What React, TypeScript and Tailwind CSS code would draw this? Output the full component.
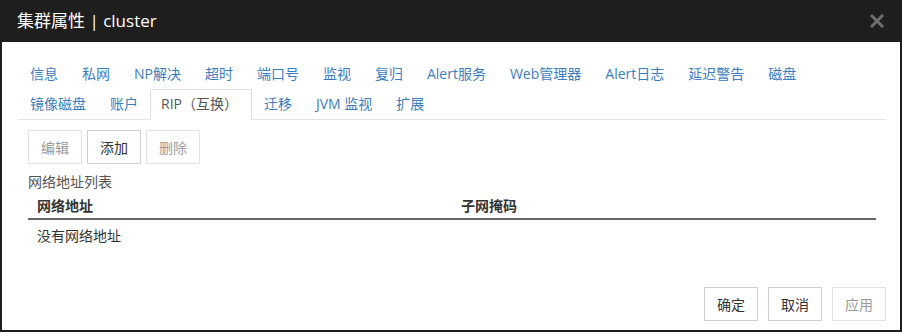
import React from "react";

const row1 = ["信息", "私网", "NP解决", "超时", "端口号", "监视", "复归", "Alert服务", "Web管理器", "Alert日志", "延迟警告", "磁盘"];
const row2 = ["镜像磁盘", "账户", "RIP（互换）", "迁移", "JVM 监视", "扩展"];

function Tab({ label, active }: { label: string; active?: boolean }) {
  if (active) {
    return (
      <div className="h-[31px] -mb-px pl-[10px] pr-[13px] border border-[#ddd] border-b-white bg-white text-[#555] leading-[28px] whitespace-nowrap rounded-t-[2px]">
        {label}
      </div>
    );
  }
  return (
    <div className="h-[30px] px-[11px] border border-transparent text-[#3b7dc0] leading-[28px] whitespace-nowrap">
      {label}
    </div>
  );
}

function Btn({ label, enabled }: { label: string; enabled?: boolean }) {
  return (
    <div
      className={
        "w-[54px] h-[34px] flex items-center justify-center border text-[14px] " +
        (enabled ? "border-[#cfcfcf] text-[#333]" : "border-[#e3e3e3] text-[#9a9a9a]")
      }
    >
      {label}
    </div>
  );
}

export default function App() {
  return (
    <div
      className="w-[904px] h-[334px] bg-white text-[14px]"
      style={{ fontFamily: '"Open Sans","Noto Sans CJK SC",sans-serif' }}
    >
      <div className="w-[902px] h-[332px] border-x-2 border-b-2 border-[#1e1e1e] flex flex-col">
        <div className="h-[42px] bg-[#1e1e1e] flex items-center justify-between pl-[15px] pr-[16px] shrink-0">
          <div className="text-white text-[17px] leading-[24px]">集群属性 | cluster</div>
          <svg width="14" height="14" viewBox="0 0 14 14">
            <path d="M2 2 L12 12 M12 2 L2 12" stroke="#6e6e6e" strokeWidth="3" strokeLinecap="square" />
          </svg>
        </div>
        <div className="flex-1 flex flex-col pt-[17px] pl-[16px] pr-[14px] pb-[9px]">
          <div className="flex flex-wrap items-start border-b border-[#e5e5e5]">
            {row1.map((t) => (
              <Tab key={t} label={t} />
            ))}
            <div className="basis-full h-0" />
            {row2.map((t) => (
              <Tab key={t} label={t} active={t === "RIP（互换）"} />
            ))}
          </div>
          <div className="px-[10px]">
            <div className="flex gap-[5px] mt-[10px]">
              <Btn label="编辑" />
              <Btn label="添加" enabled />
              <Btn label="删除" />
            </div>
            <div className="mt-[8px] leading-[20px] text-[#555]">网络地址列表</div>
            <div className="grid grid-cols-2 border-b-2 border-[#666] pt-[4px] pb-[2px] font-bold text-[#333] leading-[20px]">
              <div className="pl-[9px]">网络地址</div>
              <div className="pl-[9px]">子网掩码</div>
            </div>
            <div className="pt-[6px] pl-[9px] leading-[20px] text-[#333]">没有网络地址</div>
          </div>
          <div className="flex-1" />
          <div className="flex justify-end gap-[10px]">
            <Btn label="确定" enabled />
            <Btn label="取消" enabled />
            <Btn label="应用" />
          </div>
        </div>
      </div>
    </div>
  );
}
